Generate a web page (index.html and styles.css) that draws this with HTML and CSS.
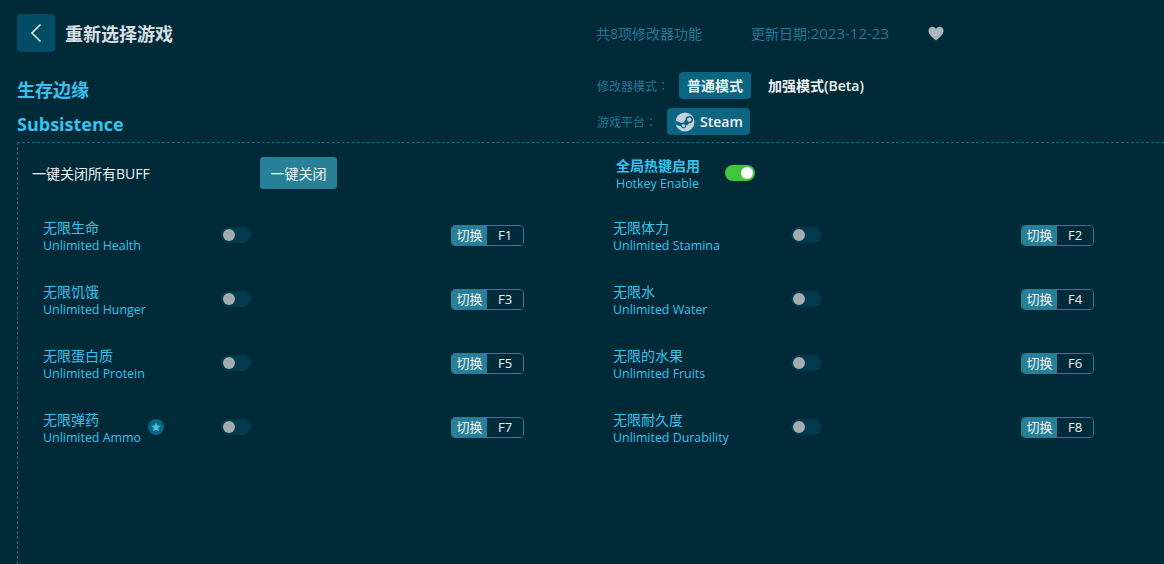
FILE: index.html
```html
<!DOCTYPE html>
<html lang="zh-CN">
<head>
    <meta charset="UTF-8">
    <title>重新选择游戏</title>
    <link rel="stylesheet" href="styles.css">
</head>
<body>
    <div class="container">
        <div class="top-bar">
            <div class="back-wrap">
                <button class="back-btn">
                    <svg width="14" height="20" viewBox="0 0 14 20"><path d="M11.5 1.5 3 10l8.5 8.5" fill="none" stroke="#e3edf0" stroke-width="1.6"/></svg>
                </button>
                <span class="back-title">重新选择游戏</span>
            </div>
            <div class="top-info">
                <span class="count">共8项修改器功能</span>
                <span class="date">更新日期:<span class="date-num">2023-12-23</span></span>
                <svg class="heart" width="16" height="15" viewBox="0 0 16 15"><path d="M8 14.5C3 10.5.5 8 .5 4.8.5 2.4 2.300.8 4.400.8 5.900.8 7.200 1.600 8 3c.8-1.400 2.100-2.200 3.600-2.200 2.100 0 3.900 1.600 3.900 4 0 3.200-2.500 5.700-7.500 9.700z" fill="#a9b6bd"/></svg>
            </div>
        </div>

        <div class="game-row">
            <div class="game-name">
                <h1>生存边缘</h1>
                <h2>Subsistence</h2>
            </div>
            <div class="mode-box">
                <div class="mode-line">
                    <span class="mode-label">修改器模式<span class="colon" lang="zh-TW">：</span></span>
                    <span class="mode-btn active">普通模式</span>
                    <span class="mode-btn">加强模式(Beta)</span>
                </div>
                <div class="mode-line">
                    <span class="mode-label platform">游戏平台<span class="colon" lang="zh-TW">：</span></span>
                    <span class="steam-btn">
                        <svg width="20" height="20" viewBox="0 0 20 20">
                            <circle cx="10" cy="10" r="9.500" fill="#c3d0da"/>
                            <path d="M.6 12.200 6 14.400a2.800 2.800 0 0 0 5.400-.9l3-2.200a3.700 3.700 0 1 0-3.800-3.700l-2.100 3a2.800 2.800 0 0 0-1.700.4L.5 8.800z" fill="#0b6480"/>
                            <circle cx="14.300" cy="7.600" r="2.200" fill="#c3d0da"/>
                            <circle cx="8.500" cy="13.600" r="1.600" fill="#c3d0da"/>
                        </svg>
                        Steam
                    </span>
                </div>
            </div>
        </div>

        <div class="panel">
            <div class="panel-head">
                <div class="close-all">
                    <span class="close-label">一键关闭所有BUFF</span>
                    <button class="close-btn">一键关闭</button>
                </div>
                <div class="hotkey">
                    <div class="hotkey-text">
                        <div class="hotkey-cn">全局热键启用</div>
                        <div class="hotkey-en">Hotkey Enable</div>
                    </div>
                    <span class="switch on"></span>
                </div>
            </div>

            <div class="cheats">
                <div class="cheat">
                    <div class="cheat-name"><div class="cn">无限生命</div><div class="en">Unlimited Health</div></div>
                    <span class="switch"></span>
                    <div class="key"><span class="key-tag">切换</span><span class="key-val">F1</span></div>
                </div>
                <div class="cheat">
                    <div class="cheat-name"><div class="cn">无限体力</div><div class="en">Unlimited Stamina</div></div>
                    <span class="switch"></span>
                    <div class="key"><span class="key-tag">切换</span><span class="key-val">F2</span></div>
                </div>
                <div class="cheat">
                    <div class="cheat-name"><div class="cn">无限饥饿</div><div class="en">Unlimited Hunger</div></div>
                    <span class="switch"></span>
                    <div class="key"><span class="key-tag">切换</span><span class="key-val">F3</span></div>
                </div>
                <div class="cheat">
                    <div class="cheat-name"><div class="cn">无限水</div><div class="en">Unlimited Water</div></div>
                    <span class="switch"></span>
                    <div class="key"><span class="key-tag">切换</span><span class="key-val">F4</span></div>
                </div>
                <div class="cheat">
                    <div class="cheat-name"><div class="cn">无限蛋白质</div><div class="en">Unlimited Protein</div></div>
                    <span class="switch"></span>
                    <div class="key"><span class="key-tag">切换</span><span class="key-val">F5</span></div>
                </div>
                <div class="cheat">
                    <div class="cheat-name"><div class="cn">无限的水果</div><div class="en">Unlimited Fruits</div></div>
                    <span class="switch"></span>
                    <div class="key"><span class="key-tag">切换</span><span class="key-val">F6</span></div>
                </div>
                <div class="cheat">
                    <div class="cheat-name">
                        <div class="cn">无限弹药</div><div class="en">Unlimited Ammo</div>
                        <span class="star-badge">
                            <svg width="10" height="10" viewBox="0 0 10 10"><path d="M5 .4 6.400 3.400 9.700 3.800 7.300 6 7.900 9.300 5 7.700 2.100 9.300 2.700 6 .3 3.800 3.600 3.400z" fill="#3cc3ee"/></svg>
                        </span>
                    </div>
                    <span class="switch"></span>
                    <div class="key"><span class="key-tag">切换</span><span class="key-val">F7</span></div>
                </div>
                <div class="cheat">
                    <div class="cheat-name"><div class="cn">无限耐久度</div><div class="en">Unlimited Durability</div></div>
                    <span class="switch"></span>
                    <div class="key"><span class="key-tag">切换</span><span class="key-val">F8</span></div>
                </div>
            </div>
        </div>
    </div>
</body>
</html>
```

FILE: styles.css
```css
* {
    margin: 0;
    padding: 0;
    box-sizing: border-box;
}

html, body {
    height: 100%;
    overflow: hidden;
}

body {
    font-family: "Open Sans", "Noto Sans CJK SC", sans-serif;
    background: #012a39;
    color: #fff;
}

.container {
    height: 564px;
    padding: 14px 0 0 17px;
    display: flex;
    flex-direction: column;
}

.top-bar {
    display: flex;
    align-items: center;
    height: 38px;
}

.back-wrap {
    width: 579px;
    display: flex;
    align-items: center;
    gap: 10px;
}

.back-btn {
    width: 38px;
    height: 38px;
    border: none;
    border-radius: 4px;
    background: #034c66;
    display: flex;
    align-items: center;
    justify-content: center;
}

.back-title {
    font-size: 18px;
    font-weight: 700;
    color: #d9e0e3;
}

.top-info {
    display: flex;
    align-items: center;
    font-size: 14px;
    color: #237894;
}

.count {
    width: 155px;
}

.date {
    width: 177px;
}

.date-num {
    font-size: 15px;
}

.game-row {
    display: flex;
    height: 90px;
}

.game-name {
    width: 580px;
    padding-top: 23px;
    color: #36c2ec;
}

.game-name h1 {
    font-size: 18px;
    line-height: 30px;
    font-weight: 700;
}

.game-name h2 {
    font-size: 18px;
    line-height: 24px;
    margin-top: 7px;
    font-weight: 700;
}

.mode-box {
    padding-top: 20px;
}

.mode-line {
    display: flex;
    align-items: center;
    height: 27px;
    margin-bottom: 9px;
}

.mode-label {
    width: 82px;
    font-size: 12px;
    color: #237894;
}

.mode-label.platform {
    width: 70px;
}

/* full-width colon sits centred in its box in the reference font */
.colon {
    font-family: "Noto Sans CJK TC", sans-serif;
}

.mode-btn {
    height: 27px;
    line-height: 27px;
    padding: 0 8px;
    border-radius: 4px;
    font-size: 14px;
    margin-right: 9px;
    color: #f0f4f5;
    font-weight: 600;
}

.mode-btn.active {
    background: #0b6480;
}

.steam-btn {
    display: flex;
    align-items: center;
    gap: 5px;
    height: 27px;
    padding: 0 7px 0 8px;
    border-radius: 4px;
    background: #0b6480;
    font-size: 14px;
    font-weight: 600;
    color: #f0f4f5;
}

.panel {
    flex-grow: 1;
    border-top: 1px dashed #0f6f8d;
    border-left: 1px dashed #0f6f8d;
}

.panel-head {
    display: flex;
    align-items: center;
    height: 60px;
}

.close-all {
    width: 598px;
    padding-left: 14px;
    display: flex;
    align-items: center;
}

.close-label {
    width: 228px;
    font-size: 14px;
    color: #eef3f5;
}

.close-btn {
    width: 77px;
    height: 32px;
    border: none;
    border-radius: 3px;
    background: #288098;
    color: #eef3f5;
    font-family: inherit;
    font-size: 14px;
}

.hotkey {
    display: flex;
    align-items: center;
    gap: 25px;
}

.hotkey-text {
    padding-top: 2px;
}

.hotkey-cn {
    font-size: 14px;
    font-weight: 700;
    line-height: 19px;
    color: #36c2ec;
}

.hotkey-en {
    font-size: 12.4px;
    line-height: 18px;
    color: #36c2ec;
}

.switch {
    display: block;
    position: relative;
    width: 30px;
    height: 16px;
    border-radius: 8px;
    background: #023a4d;
}

/* knob */
.switch::after {
    content: "";
    position: absolute;
    left: 2px;
    top: 2px;
    width: 12px;
    height: 12px;
    border-radius: 50%;
    background: #a5abaf;
}

.switch.on {
    background: #40c63c;
}

.switch.on::after {
    left: 16px;
    background: #fff;
}

.cheats {
    display: grid;
    grid-template-columns: 570px 570px;
    grid-auto-rows: 64px;
    padding: 0 0 0 25px;
}

.cheat {
    display: flex;
    align-items: center;
    height: 64px;
}

.cheat-name {
    position: relative;
    width: 178px;
    padding-top: 4px;
    color: #36c2ec;
}

.cn {
    font-size: 14px;
    line-height: 18px;
}

.en {
    font-size: 12.4px;
    line-height: 18px;
}

/* sits beside the name without pushing the switch */
.star-badge {
    position: absolute;
    left: 105px;
    top: 12px;
    width: 16px;
    height: 16px;
    border-radius: 50%;
    background: #0b6480;
    display: flex;
    align-items: center;
    justify-content: center;
}

.key {
    margin-left: 200px;
    width: 73px;
    height: 21px;
    display: flex;
    border: 1px solid #288098;
    border-radius: 4px;
    overflow: hidden;
    font-size: 13px;
}

.key-tag {
    width: 35px;
    background: #288098;
    color: #eef3f5;
    text-align: center;
    line-height: 18px;
}

.key-val {
    flex-grow: 1;
    text-align: center;
    font-weight: 500;
    line-height: 18px;
    color: #eef3f5;
    background: #012a39;
}
```
